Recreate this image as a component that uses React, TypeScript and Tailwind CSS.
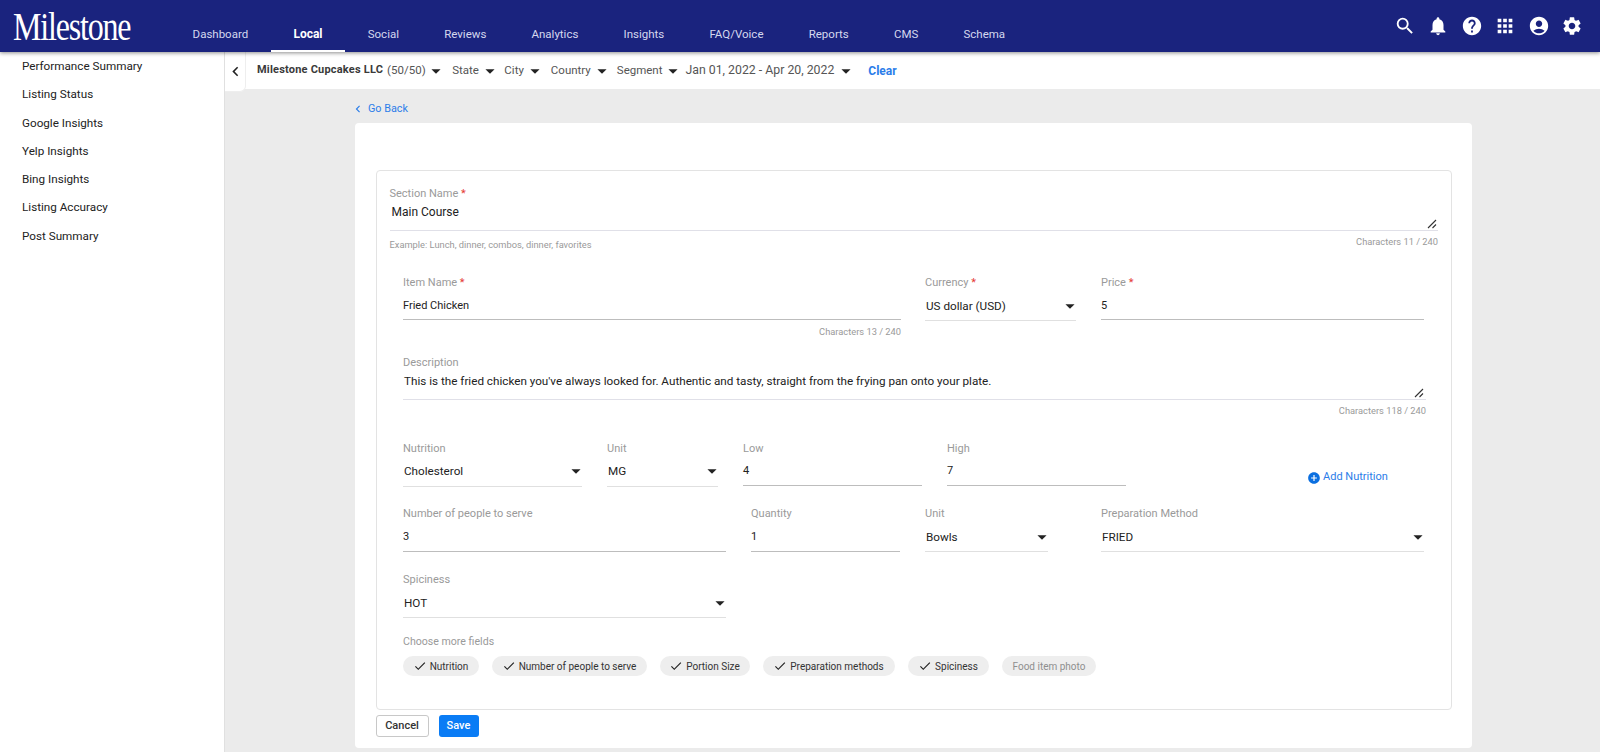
import React from "react";
import { MdSearch, MdNotifications, MdHelp, MdApps, MdAccountCircle, MdSettings, MdArrowDropDown, MdAddCircle, MdCheck, MdChevronLeft } from "react-icons/md";

const tabs = ["Dashboard", "Local", "Social", "Reviews", "Analytics", "Insights", "FAQ/Voice", "Reports", "CMS", "Schema"];
const side = ["Performance Summary", "Listing Status", "Google Insights", "Yelp Insights", "Bing Insights", "Listing Accuracy", "Post Summary"];

function Caret({ className = "" }: { className?: string }) {
  return <MdArrowDropDown className={"text-[22px] shrink-0 text-[#222] " + className} />;
}

function Resize({ className = "" }: { className?: string }) {
  return (
    <svg width="10" height="10" viewBox="0 0 10 10" className={"absolute bottom-[1px] " + className}>
      <path d="M1 9 L9 1 M5.5 9 L9 5.5" stroke="#333" strokeWidth="1.1" fill="none" />
    </svg>
  );
}

function Field({ label, value, req, select, short, className = "" }: { label: string; value: string; req?: boolean; select?: boolean; short?: boolean; className?: string }) {
  return (
    <div className={"shrink-0 " + className}>
      <div className="text-[11px] leading-[16px] text-[#9a9a9a]">
        {label}
        {req && <span className="text-[#e53935]"> *</span>}
      </div>
      <div className={"mt-[4.5px] flex items-start justify-between leading-[20px] text-[#222] border-b " + (select ? "h-[25.5px] text-[11.7px] border-[#e0e0e0]" : short ? "h-[24px] text-[11px] border-[#bdbdbd]" : "h-[25px] text-[11px] border-[#bdbdbd]")}>
        <span className={select ? "pl-px" : ""}>{value}</span>
        {select && <Caret className="-mr-[5px] -mt-px" />}
      </div>
    </div>
  );
}

function Chip({ label, on = true, className = "" }: { label: string; on?: boolean; className?: string }) {
  return (
    <div className={"h-[20px] shrink-0 rounded-full bg-[#eeeeee] flex items-center justify-center text-[10px] " + (on ? "text-[#333] " : "text-[#8f8f8f] ") + className}>
      {on && <MdCheck className="text-[14px] mr-[3px] -ml-px text-[#222]" />}
      {label}
    </div>
  );
}

export default function App() {
  return (
    <div className="h-[752px] w-[1600px] overflow-hidden bg-[#ebebeb] flex flex-col text-[#222]" style={{ fontFamily: "Roboto, 'Liberation Sans', sans-serif" }}>
      <header className="relative z-20 h-[52px] shrink-0 bg-[#1a237e] flex items-start shadow-[0_1px_4px_rgba(0,0,0,0.45)] text-white">
        <div className="w-[170px] shrink-0 pl-[13px] pt-[3px]">
          <div className="origin-left scale-x-[0.78] text-[41px] leading-[46px] tracking-[-1.5px] text-white whitespace-nowrap" style={{ fontFamily: "'Liberation Serif', serif" }}>Milestone</div>
        </div>
        <nav className="flex h-[52px]">
          {tabs.map((t) => (
            <div key={t} className={"h-[52px] px-[22.6px] flex items-center pt-[18px] " + (t === "Local" ? "text-[12px] font-bold text-white border-b-2 border-white" : "text-[11.5px] text-[#d5d8ee]")}>{t}</div>
          ))}
        </nav>
        <div className="ml-auto pr-[11px] flex items-center h-[52px] pb-[1px] text-white">
          {[MdSearch, MdNotifications, MdHelp, MdApps, MdAccountCircle, MdSettings].map((I, i) => (
            <div key={i} className="w-[33.5px] flex justify-center"><I className="text-[22px]" /></div>
          ))}
        </div>
      </header>
      <div className="flex flex-1 min-h-0">
        <aside className="w-[225px] shrink-0 bg-white border-r border-[#e0e0e0] pt-px text-[11.7px] text-[#222]">
          {side.map((s) => (
            <div key={s} className="h-[28.3px] pl-[22px] leading-[26px]">{s}</div>
          ))}
        </aside>
        <main className="flex-1 min-w-0 flex flex-col">
          <div className="relative h-[37px] shrink-0 bg-white flex items-center text-[11.5px] text-[#555]">
            <div className="absolute left-0 top-0 w-[21px] h-[40px] bg-white rounded-br-[6px] border-r border-b border-[#eeeeee] flex items-center justify-center">
              <MdChevronLeft className="text-[23px] text-[#222] ml-[1px]" />
            </div>
            <div className="ml-[32px] flex items-center whitespace-nowrap">
              <span className="font-bold text-[#3a3a3a] text-[11px] tracking-[0.2px]">Milestone Cupcakes LLC</span>
              <span className="ml-[4px]">(50/50)</span>
              <Caret className="ml-[-1px]" />
            </div>
            <div className="ml-[5.5px] flex items-center">State<Caret /></div>
            <div className="ml-[3.5px] flex items-center">City<Caret /></div>
            <div className="ml-[5px] flex items-center">Country<Caret /></div>
            <div className="ml-[4px] flex items-center">Segment<Caret /></div>
            <div className="ml-[1px] flex items-center text-[12.3px]">Jan 01, 2022 - Apr 20, 2022<Caret className="ml-[1px]" /></div>
            <div className="ml-[11px] text-[12px] font-bold text-[#2b7de9]">Clear</div>
          </div>
          <div className="ml-[130px] h-[34px] flex items-center text-[10.8px] text-[#2b7de9] pt-[6px]">
            <MdChevronLeft className="text-[14px] mr-[3px] -ml-[4px]" />
            <span>Go Back</span>
          </div>
          <div className="ml-[130px] w-[1117px] h-[625px] shrink-0 bg-white rounded-[4px] pt-[47px] pl-[20.5px] pr-[20px]">
            <div className="h-[540px] rounded-[4px] border border-[#e3e3e3] pt-[15px] pl-[13px] pr-[13px]">
              <div className="text-[11px] leading-[16px] text-[#9a9a9a]">Section Name<span className="text-[#e53935]"> *</span></div>
              <div className="relative h-[29px] border-b border-[#e0e0e8] pl-[2px] text-[12px] leading-[20px] text-[#222]">
                Main Course
                <Resize className="right-[1px]" />
              </div>
              <div className="flex justify-between pt-[5px] text-[9.3px] leading-[12px] text-[#9a9a9a]">
                <span className="pt-[2.5px]">Example: Lunch, dinner, combos, dinner, favorites</span>
                <span>Characters 11 / 240</span>
              </div>

              <div className="pl-[13.5px] pr-[12px] mt-[24.5px]">
                <div className="flex">
                  <Field label="Item Name" value="Fried Chicken" req short className="w-[498px]" />
                  <Field label="Currency" value="US dollar (USD)" req select className="w-[151px] ml-[24px]" />
                  <Field label="Price" value="5" req short className="w-[323px] ml-[25px]" />
                </div>
                <div className="w-[498px] text-right text-[9.3px] leading-[12px] text-[#9a9a9a] mt-[4.5px]">Characters 13 / 240</div>

                <div className="text-[11px] leading-[16px] text-[#9a9a9a] mt-[17px]">Description</div>
                <div className="relative h-[29px] border-b border-[#e0e0e8] pl-px text-[11.7px] leading-[20px] text-[#222]">
                  This is the fried chicken you've always looked for. Authentic and tasty, straight from the frying pan onto your plate.
                  <Resize className="right-[2px]" />
                </div>
                <div className="text-right text-[9.3px] leading-[12px] text-[#9a9a9a] mt-[5px]">Characters 118 / 240</div>

                <div className="flex mt-[24px] relative">
                  <Field label="Nutrition" value="Cholesterol" select className="w-[179px]" />
                  <Field label="Unit" value="MG" select className="w-[111px] ml-[25px]" />
                  <Field label="Low" value="4" className="w-[179px] ml-[25px]" />
                  <Field label="High" value="7" className="w-[179px] ml-[25px]" />
                  <div className="ml-[181px] mt-[27px] h-[20px] flex items-center text-[11px] text-[#2b7de9] whitespace-nowrap">
                    <MdAddCircle className="text-[14px] mr-[2px] text-[#0b6fe0]" />
                    Add Nutrition
                  </div>
                </div>

                <div className="flex mt-[18.6px]">
                  <Field label="Number of people to serve" value="3" className="w-[323px]" />
                  <Field label="Quantity" value="1" className="w-[149px] ml-[25px]" />
                  <Field label="Unit" value="Bowls" select className="w-[123px] ml-[25px]" />
                  <Field label="Preparation Method" value="FRIED" select className="w-[323px] ml-[53px]" />
                </div>

                <div className="flex mt-[20px]">
                  <Field label="Spiciness" value="HOT" select className="w-[323px]" />
                </div>

                <div className="text-[10.6px] leading-[16px] text-[#9a9a9a] mt-[16.2px]">Choose more fields</div>
                <div className="flex gap-[13px] mt-[6px]">
                  <Chip label="Nutrition" className="w-[76px]" />
                  <Chip label="Number of people to serve" className="w-[155px]" />
                  <Chip label="Portion Size" className="w-[90px]" />
                  <Chip label="Preparation methods" className="w-[132px]" />
                  <Chip label="Spiciness" className="w-[81px]" />
                  <Chip label="Food item photo" on={false} className="w-[94px]" />
                </div>
              </div>
            </div>
            <div className="flex gap-[10px] mt-[5px]">
              <button className="w-[53px] h-[22px] rounded-[3px] border border-[#c8c8c8] bg-white text-[11px] font-medium text-[#333]">Cancel</button>
              <button className="w-[40px] h-[22px] rounded-[3px] bg-[#0a7cf5] text-[11px] font-medium text-white">Save</button>
            </div>
          </div>
        </main>
      </div>
    </div>
  );
}
